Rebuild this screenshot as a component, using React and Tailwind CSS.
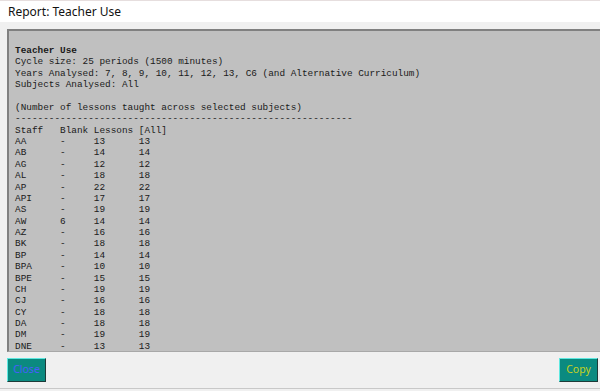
import React from "react";

const rows = [
  ["AA", "-", "13", "13"],
  ["AB", "-", "14", "14"],
  ["AG", "-", "12", "12"],
  ["AL", "-", "18", "18"],
  ["AP", "-", "22", "22"],
  ["API", "-", "17", "17"],
  ["AS", "-", "19", "19"],
  ["AW", "6", "14", "14"],
  ["AZ", "-", "16", "16"],
  ["BK", "-", "18", "18"],
  ["BP", "-", "14", "14"],
  ["BPA", "-", "10", "10"],
  ["BPE", "-", "15", "15"],
  ["CH", "-", "19", "19"],
  ["CJ", "-", "16", "16"],
  ["CY", "-", "18", "18"],
  ["DA", "-", "18", "18"],
  ["DM", "-", "19", "19"],
  ["DNE", "-", "13", "13"],
];

const pad = (s, n) => s + " ".repeat(Math.max(0, n - s.length));

export default function App() {
  const body = [
    "Cycle size: 25 periods (1500 minutes)",
    "Years Analysed: 7, 8, 9, 10, 11, 12, 13, C6 (and Alternative Curriculum)",
    "Subjects Analysed: All",
    "",
    "(Number of lessons taught across selected subjects)",
    "-".repeat(60),
    "Staff   Blank Lessons [All]",
    ...rows.map((r) => pad(r[0], 8) + pad(r[1], 6) + pad(r[2], 8) + r[3]),
  ].join("\n");

  return (
    <div className="w-[600px] h-[391px] bg-[#f0f0f0] flex flex-col overflow-hidden relative">
      <div className="h-[22px] bg-white flex items-center pl-[8px] text-[12px] text-[#111] font-['Noto_Sans',sans-serif] border-t border-[#e6dede]">
        Report: Teacher Use
      </div>
      <div className="pt-[7px] pl-[7px]">
        <div className="h-[323px] w-[610px] bg-[#c0c0c0] border-t-2 border-l-2 border-t-[#808080] border-l-[#808080] border-b border-b-[#a8a8a8] overflow-hidden">
          <pre className="m-0 pl-[6px] pt-[14px] font-['Liberation_Mono',monospace] text-[9.4px] leading-[11.38px] text-[#1a1a1a] whitespace-pre">
            <span className="font-bold">Teacher Use</span>
            {"\n" + body}
          </pre>
        </div>
      </div>
      <div className="flex justify-between pl-[7px] pr-[2px] mt-[6px]">
        <button className="w-[39px] h-[24px] bg-[#0b8a80] border border-t-[#5fe8e0] border-l-[#5fe8e0] border-b-[#1e3a38] border-r-[#1e3a38] flex items-center justify-center text-[10.5px] text-[#4a5cff] font-['Noto_Sans',sans-serif]">
          Close
        </button>
        <button className="w-[39px] h-[24px] bg-[#0b8a80] border border-t-[#5fe8e0] border-l-[#5fe8e0] border-b-[#1e3a38] border-r-[#1e3a38] flex items-center justify-center text-[10.5px] text-[#c8d020] font-['Noto_Sans',sans-serif]">
          Copy
        </button>
      </div>
      <div className="mt-auto h-[3px] border-t border-[#c8c8c8] bg-[#f0f0f0]"></div>
    </div>
  );
}
